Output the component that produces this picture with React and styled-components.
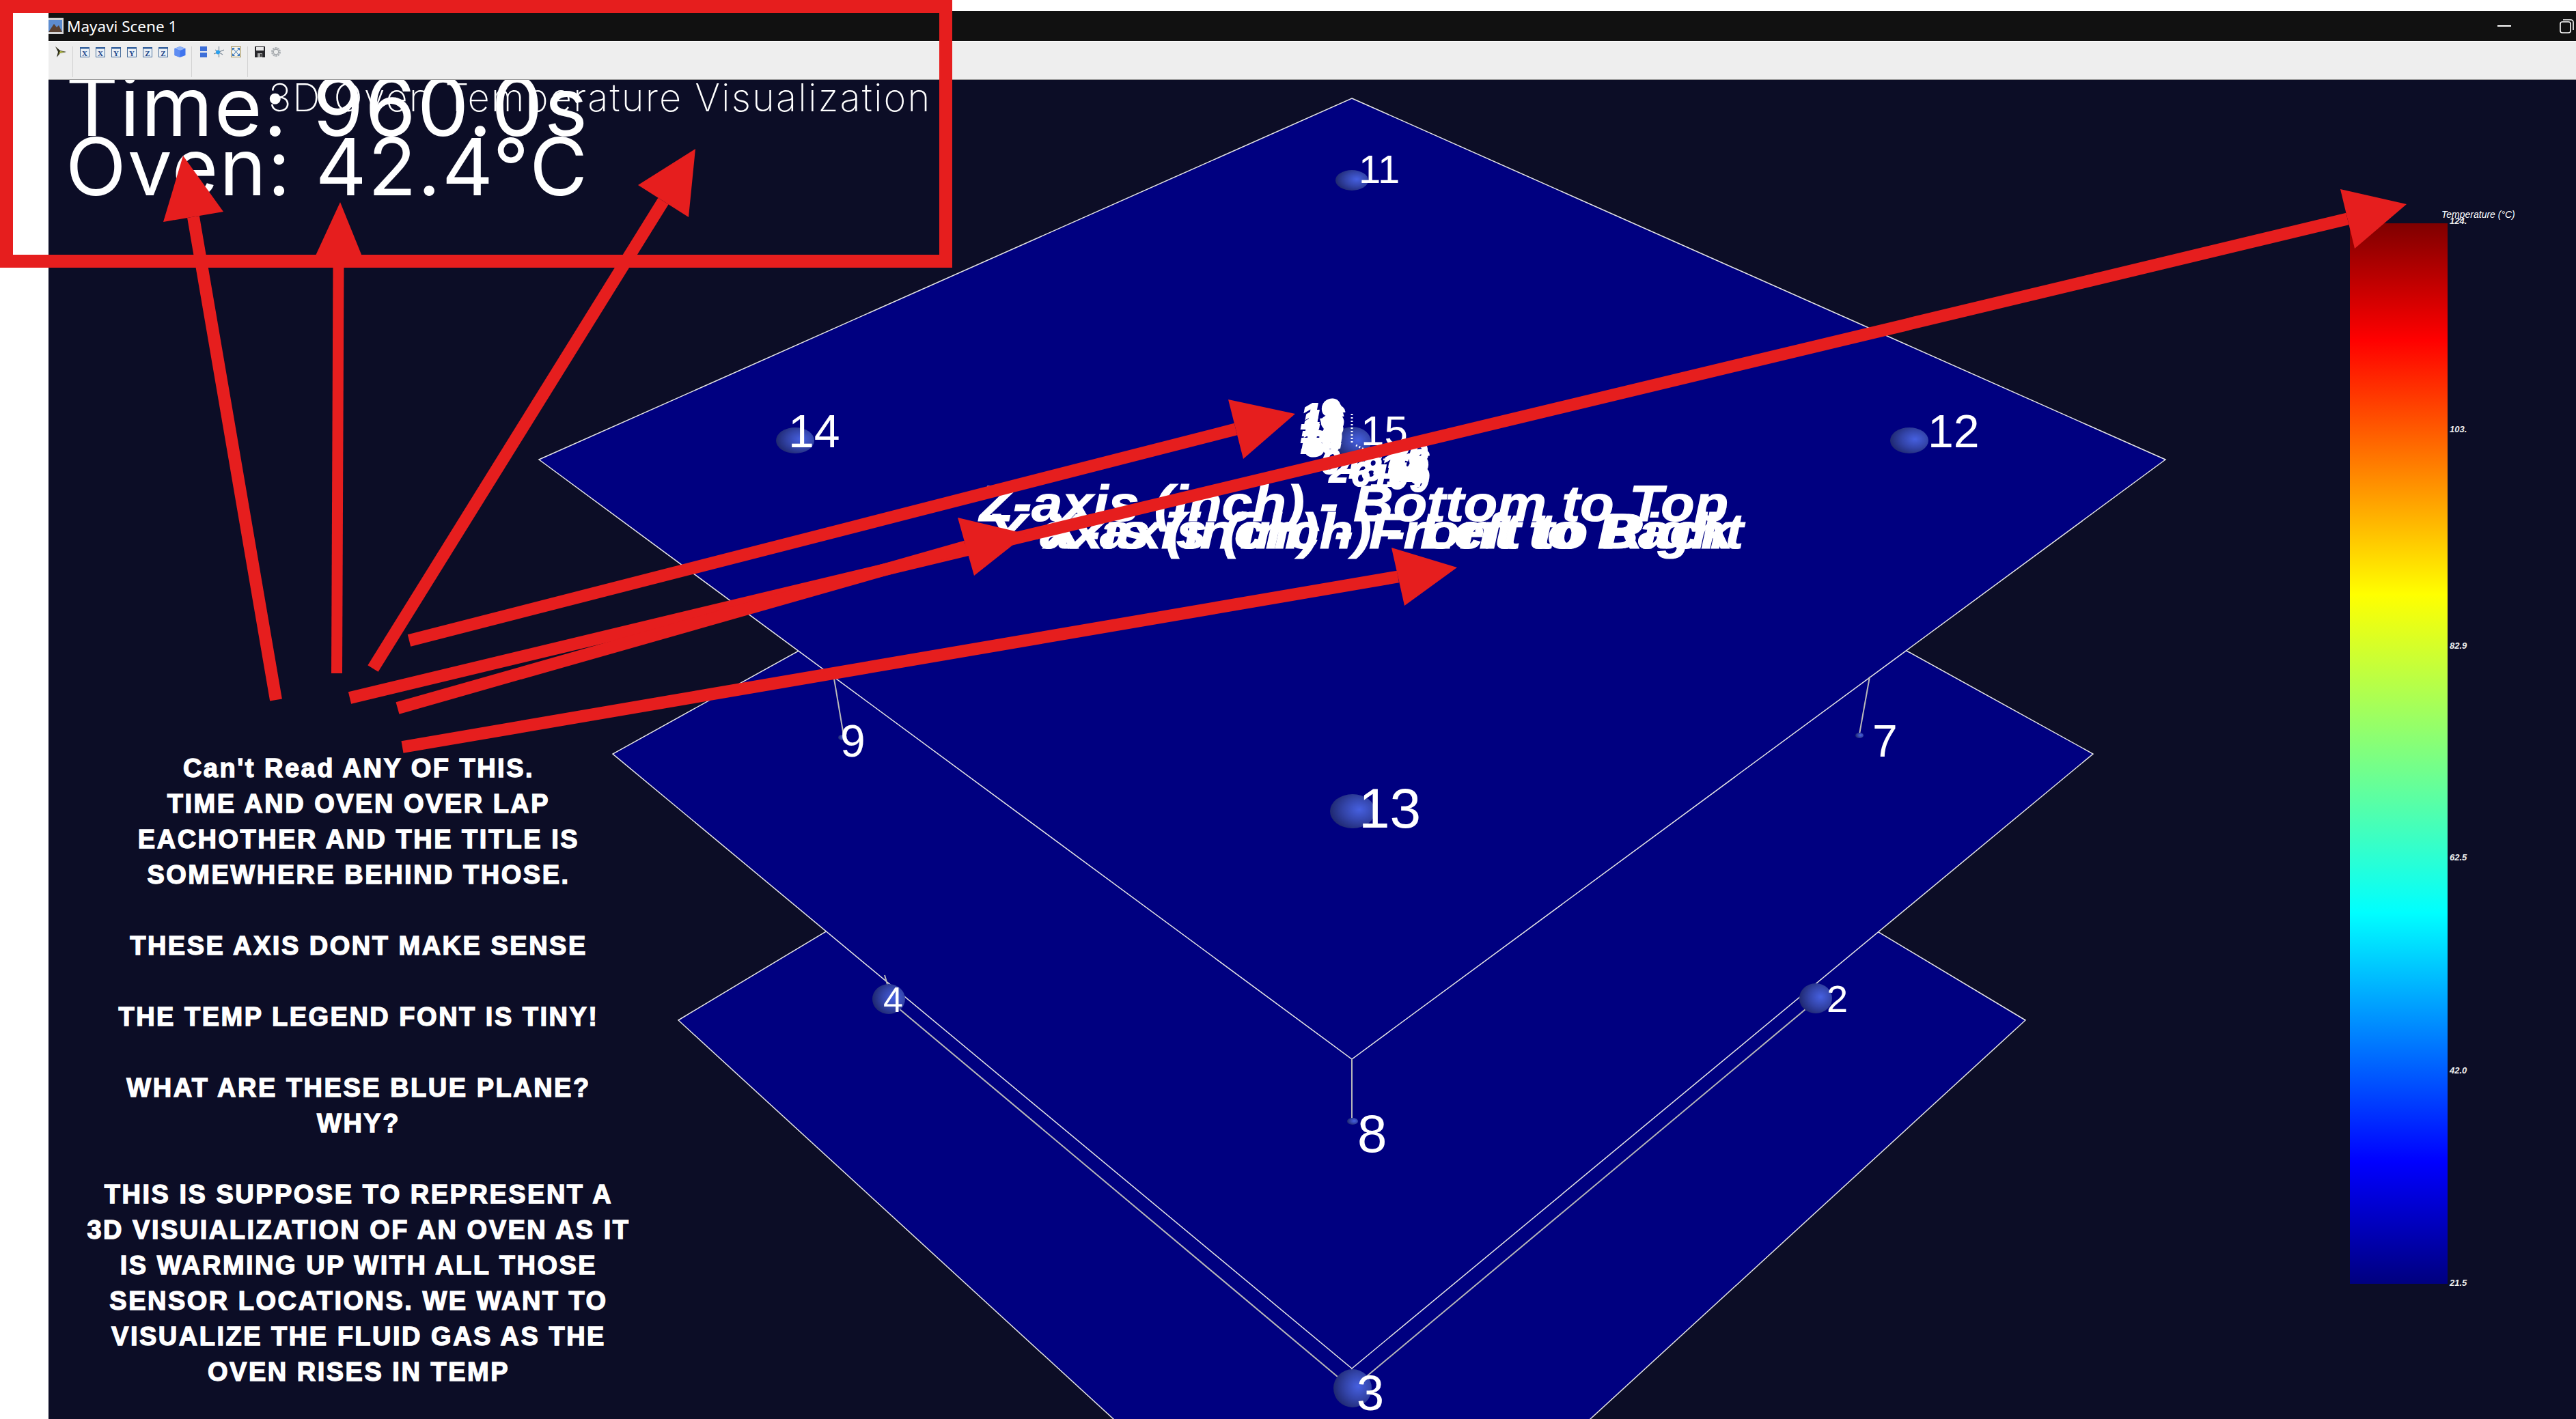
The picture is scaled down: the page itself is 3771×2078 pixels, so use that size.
import React from 'react';
import styled, { createGlobalStyle } from 'styled-components';

const GlobalStyle = createGlobalStyle`
  html, body {
    margin: 0;
    padding: 0;
    background: #fff;
    font-family: "Liberation Sans", Arial, sans-serif;
  }
`;

const Page = styled.div`
  position: relative;
  width: 3771px;
  height: 2078px;
  padding: 16px 0 0 71px;
  box-sizing: border-box;
  background: #fff;
  overflow: hidden;
`;

const Window = styled.div`
  display: flex;
  flex-direction: column;
  height: 100%;
`;

const TitleBar = styled.div`
  display: flex;
  align-items: center;
  flex: 0 0 45px;
  background: #111;
  border-bottom: 1px solid #fff;
  box-sizing: border-box;
`;

const WindowTitle = styled.span`
  margin-left: 5px;
  font-family: "Noto Sans", sans-serif;
  font-size: 22.5px;
  color: #fff;
`;

const WindowControls = styled.div`
  display: flex;
  align-items: center;
  gap: 71px;
  margin-left: auto;
  padding-right: 3px;
`;

const MinimizeLine = styled.div`
  width: 20px;
  height: 2px;
  background: #fff;
`;

const Toolbar = styled.div`
  display: flex;
  align-items: flex-start;
  flex: 0 0 56px;
  padding: 7px 0 0 9px;
  background: #eee;
  border-bottom: 1px solid #999;
  box-sizing: border-box;
`;

const ToolGroup = styled.div`
  display: flex;
  align-items: center;
  gap: ${p => p.$gap || 8}px;
  height: 16px;
`;

const ToolSeparator = styled.div`
  width: 1px;
  height: 45px;
  margin: 0 ${p => p.$after || 10}px 0 ${p => p.$before || 9}px;
  background: #d2d2d2;
`;

const Scene = styled.div`
  position: relative;
  flex: 1;
  overflow: hidden;
  background: #0c0d26;
`;

const SceneDrawing = styled.svg`
  position: absolute;
  top: 0;
  left: 0;
  width: 3700px;
  height: 1961px;
`;

const Hud = styled.div`
  position: absolute;
  left: ${p => p.$x}px;
  top: ${p => p.$y}px;
  font-family: "Inter", "Liberation Sans", sans-serif;
  font-size: ${p => p.$size}px;
  font-weight: ${p => p.$weight || 400};
  line-height: 1;
  letter-spacing: ${p => p.$spacing || 0}px;
  color: #fff;
  white-space: nowrap;
`;

const Note = styled.div`
  position: absolute;
  left: 24px;
  top: 982px;
  width: 860px;
  font-size: 38px;
  line-height: 52px;
  font-weight: 700;
  text-align: center;
  color: #fff;
  -webkit-text-stroke: 1.4px #fff;
  letter-spacing: 2.5px;
`;

const NotePara = styled.p`
  margin: 0 0 52px;
`;

const Legend = styled.div`
  position: absolute;
  left: 3369px;
  top: 210px;
  width: 143px;
  height: 1553px;
  background: linear-gradient(
    to top,
    #00007f 0%,
    #0000ff 11.5%,
    #00ffff 35%,
    #7fff7f 50%,
    #ffff00 65%,
    #ff0000 89%,
    #7f0000 100%
  );
`;

const LegendTitle = styled.span`
  position: absolute;
  left: 134px;
  top: -21px;
  font-size: 14px;
  font-style: italic;
  color: #fff;
  white-space: nowrap;
`;

const LegendTick = styled.span`
  position: absolute;
  left: 146px;
  top: ${p => p.$y}px;
  font-size: 13px;
  font-style: italic;
  font-weight: 700;
  line-height: 13px;
  color: #eee;
`;

const AnnotationLayer = styled.svg`
  position: absolute;
  top: 0;
  left: 0;
  width: 3771px;
  height: 2078px;
  pointer-events: none;
`;

const RedBox = styled.div`
  position: absolute;
  top: 0;
  left: 0;
  width: 1394px;
  height: 392px;
  border: 19px solid #e61e1e;
  box-sizing: border-box;
`;

const SensorLabel = styled.text`
  font-family: "Liberation Sans", sans-serif;
  fill: #fff;
`;

const TickBlob = styled.text`
  font-family: "Liberation Sans", sans-serif;
  font-style: italic;
  font-weight: 700;
  fill: #fff;
  stroke: #fff;
  stroke-width: 2px;
`;

const AxisLabel = styled.text`
  font-family: "Liberation Sans", sans-serif;
  font-style: italic;
  font-weight: 700;
  fill: #fff;
  stroke: #fff;
  stroke-width: 1.2px;
`;

// all scene numbers below are in page pixels, the viewBox takes care of the offset
const PLANES = [
  '1979,902 2965,1494 1979,2398 993,1494',
  '1979,504 3064,1104 1979,2004 897,1104',
  '1979,144 3170,673 1979,1551 789,673',
];

const WIRES = [
  [1317, 1478, 1958, 2016],
  [2643, 1478, 2000, 2016],
  [1979, 2004, 1979, 2028],
  [1979, 1551, 1979, 1642],
  [1221, 994, 1235, 1077],
  [2737, 991, 2722, 1075],
  [1295, 1428, 1300, 1445],
];

const SENSORS = [
  { cx: 1979, cy: 264, rx: 24, ry: 15, label: '11', x: 1989, y: 268, size: 58 },
  { cx: 1164, cy: 645, rx: 28, ry: 19, label: '14', x: 1154, y: 655, size: 68 },
  { cx: 2795, cy: 645, rx: 28, ry: 19, label: '12', x: 2822, y: 655, size: 68 },
  { cx: 1980, cy: 647, rx: 27, ry: 22, label: '15', x: 1992, y: 652, size: 62 },
  { cx: 1980, cy: 1188, rx: 33, ry: 25, label: '13', x: 1989, y: 1212, size: 82 },
  { cx: 1301, cy: 1463, rx: 24, ry: 22, label: '4', x: 1293, y: 1482, size: 52 },
  { cx: 2658, cy: 1462, rx: 24, ry: 22, label: '2', x: 2674, y: 1482, size: 56 },
  { cx: 1980, cy: 2033, rx: 28, ry: 28, label: '3', x: 1986, y: 2065, size: 72 },
  { cx: 1980, cy: 1642, rx: 8, ry: 5, label: '8', x: 1987, y: 1687, size: 78 },
  { cx: 1233, cy: 1080, rx: 6, ry: 4, label: '9', x: 1230, y: 1108, size: 66 },
  { cx: 2722, cy: 1077, rx: 6, ry: 4, label: '7', x: 2741, y: 1108, size: 66 },
];

// overlapping tick numbers of the two axes that end up on top of each other
const TICKS = [
  ['18', 1904, 628, 54], ['16', 1906, 638, 54], ['14', 1904, 648, 54], ['12', 1906, 656, 54],
  ['10', 1904, 664, 54], ['8', 1910, 668, 54], ['9', 1932, 622, 54], ['6', 1938, 632, 54],
  ['0', 1934, 694, 50], ['2', 1946, 706, 50], ['4', 1962, 700, 50], ['6', 1978, 712, 50],
  ['8', 1994, 704, 50], ['10', 2006, 716, 50], ['12', 2022, 700, 50], ['14', 2030, 712, 50],
  ['16', 2036, 694, 50], ['18', 2034, 704, 50], ['20', 2034, 684, 50], ['8', 2062, 694, 50],
  ['6', 2062, 708, 50], ['9', 2064, 720, 50],
];

const ARROWS = [
  { tail: [404, 1025], tip: [268, 228], head: [[239, 325], [327, 310]], width: 18 },
  { tail: [493, 986], tip: [498, 296], head: [[457, 385], [534, 385]], width: 16 },
  { tail: [546, 979], tip: [1018, 218], head: [[934, 271], [1008, 318]], width: 18 },
  { tail: [599, 938], tip: [1896, 606], head: [[1798, 585], [1820, 672]], width: 18 },
  { tail: [512, 1022], tip: [3523, 299], head: [[3426, 277], [3447, 364]], width: 18 },
  { tail: [582, 1037], tip: [1503, 782], head: [[1402, 758], [1426, 843]], width: 18 },
  { tail: [589, 1094], tip: [2133, 831], head: [[2037, 802], [2056, 887]], width: 18 },
];

const XyzButton = ({ letter }) => (
  <svg width="14" height="15" viewBox="0 0 14 15">
    <rect x="0.5" y="0.5" width="13" height="14" fill="#eaf0f6" stroke="#4a6f9c" />
    <rect x="0" y="0" width="14" height="2.5" fill="#34609c" />
    <text x="7" y="12.5" textAnchor="middle" fontFamily="Liberation Serif" fontWeight="700" fontSize="11" fill="#1a4488">{letter}</text>
  </svg>
);

const PipelineIcon = () => (
  <svg width="17" height="16" viewBox="0 0 17 16">
    <path d="M1 0 L8 6 L17 8 L8 10 L3 16 L5 8 Z" fill="#2b2b1a" />
    <path d="M8 7 L15 8 L8 9.5 L5.5 12 Z" fill="#c7cf4a" />
  </svg>
);

const IsoCube = () => (
  <svg width="17" height="16" viewBox="0 0 17 16">
    <path d="M8.5 0 L16.5 3 V13 L8.5 16 L0.5 13 V3 Z" fill="#3f74ee" />
    <path d="M8.5 0 L16.5 3 L8.5 6 L0.5 3 Z" fill="#8fb2f7" />
    <path d="M8.5 6 V16 L0.5 13 V3 Z" fill="#5f8df2" />
  </svg>
);

const ParallelIcon = () => (
  <svg width="10" height="16" viewBox="0 0 10 16">
    <rect x="0" y="0" width="10" height="7" fill="#3d6fd8" />
    <rect x="0" y="9" width="10" height="7" fill="#3d6fd8" />
  </svg>
);

const AxesIcon = () => (
  <svg width="15" height="16" viewBox="0 0 15 16">
    <path d="M7.5 0 V16 M0 11 L15 5 M2 5 L13 12" stroke="#7a8a99" strokeWidth="1.2" />
    <circle cx="6" cy="8.5" r="3" fill="#29a0ee" />
  </svg>
);

const FullScreenIcon = () => (
  <svg width="15" height="16" viewBox="0 0 15 16">
    <rect x="0.5" y="0.5" width="14" height="15" fill="#f4f4ee" stroke="#a5935c" />
    <path d="M2 2 L6 2 L2 6 Z M13 2 L9 2 L13 6 Z M2 14 L6 14 L2 10 Z M13 14 L9 14 L13 10 Z" fill="#2f6fb8" />
    <path d="M3 3 L12 13 M12 3 L3 13" stroke="#2f6fb8" strokeWidth="1" />
  </svg>
);

const SaveIcon = () => (
  <svg width="15" height="16" viewBox="0 0 15 16">
    <path d="M0 0 H15 V16 H0 Z" fill="#26262a" />
    <rect x="2" y="1" width="11" height="5" fill="#e8e8e8" />
    <rect x="4" y="10" width="7" height="6" fill="#a9a9a9" />
    <rect x="8" y="11" width="2" height="4" fill="#333" />
  </svg>
);

const GearIcon = () => (
  <svg width="16" height="16" viewBox="0 0 16 16">
    <circle cx="8" cy="8" r="5.5" fill="none" stroke="#aeb2b6" strokeWidth="3" strokeDasharray="2.4 1" />
    <circle cx="8" cy="8" r="3.8" fill="#eceded" stroke="#9a9ea2" strokeWidth="1" />
  </svg>
);

const SceneIcon = () => (
  <svg width="22" height="24" viewBox="0 0 22 24">
    <rect x="0" y="0" width="22" height="24" fill="#d5d5d5" />
    <rect x="0" y="3" width="20" height="18" fill="#5d8ccf" />
    <path d="M0 21 L8 9 L12 14 L15 11 L20 21 Z" fill="#5a4030" />
  </svg>
);

const RestoreIcon = () => (
  <svg width="21" height="21" viewBox="0 0 21 21" fill="none" stroke="#fff" strokeWidth="1.6">
    <rect x="1" y="4" width="15" height="16" rx="3" />
    <path d="M5 1 H16 Q20 1 20 5 V16" />
  </svg>
);

const App = () => (
  <Page>
    <GlobalStyle />
    <Window>
      <TitleBar>
        <SceneIcon />
        <WindowTitle>Mayavi Scene 1</WindowTitle>
        <WindowControls>
          <MinimizeLine />
          <RestoreIcon />
        </WindowControls>
      </TitleBar>
      <Toolbar>
        <ToolGroup><PipelineIcon /></ToolGroup>
        <ToolSeparator />
        <ToolGroup $gap={9}>
          {['X', 'X', 'Y', 'Y', 'Z', 'Z'].map((letter, i) => <XyzButton key={i} letter={letter} />)}
          <IsoCube />
        </ToolGroup>
        <ToolSeparator $before={8} $after={12} />
        <ToolGroup $gap={10}>
          <ParallelIcon />
          <AxesIcon />
          <FullScreenIcon />
        </ToolGroup>
        <ToolSeparator />
        <ToolGroup $gap={8}>
          <SaveIcon />
          <GearIcon />
        </ToolGroup>
      </Toolbar>
      <Scene>
        <SceneDrawing viewBox="71 117 3700 1961">
          <defs>
            <radialGradient id="sphere" cx="0.65" cy="0.45" r="0.7">
              <stop offset="0" stopColor="#4660e0" />
              <stop offset="0.5" stopColor="#3344a8" />
              <stop offset="1" stopColor="#1c2468" />
            </radialGradient>
          </defs>
          {PLANES.map(points => (
            <polygon key={points} points={points} fill="#000080" stroke="#e4e4e4" strokeWidth="1.5" />
          ))}
          {WIRES.map(([x1, y1, x2, y2]) => (
            <line key={`${x1}-${y1}`} x1={x1} y1={y1} x2={x2} y2={y2} stroke="#b9b9b9" strokeWidth="2" />
          ))}
          {SENSORS.map(s => (
            <ellipse key={s.label} cx={s.cx} cy={s.cy} rx={s.rx} ry={s.ry} fill="url(#sphere)" />
          ))}
          {SENSORS.map(s => (
            <SensorLabel key={s.label} x={s.x} y={s.y} fontSize={s.size}>{s.label}</SensorLabel>
          ))}
          <path d="M1979 606 V650" stroke="#fff" strokeWidth="3" strokeDasharray="2 3" />
          <path d="M1985 652 L2060 690" stroke="#fff" strokeWidth="3" strokeDasharray="2 3" />
          {TICKS.map(([text, x, y, size], i) => (
            <TickBlob key={i} x={x} y={y} fontSize={size}>{text}</TickBlob>
          ))}
          <AxisLabel x="1434" y="763" fontSize="74" textLength="1096" lengthAdjust="spacingAndGlyphs">Z-axis (inch) - Bottom to Top</AxisLabel>
          <AxisLabel x="1446" y="803" fontSize="72" textLength="1090" lengthAdjust="spacingAndGlyphs">Y-axis (inch) - Front to Back</AxisLabel>
          <AxisLabel x="1530" y="803" fontSize="72" textLength="1022" lengthAdjust="spacingAndGlyphs">X-axis (inch) - Left to Right</AxisLabel>
        </SceneDrawing>
        <Hud $x={25} $y={-21} $size={120} $spacing={2}>Time: 960.0s</Hud>
        <Hud $x={25} $y={69} $size={116} $spacing={2}>Oven: 42.4°C</Hud>
        <Hud $x={322} $y={-2} $size={56} $weight={250} $spacing={2.1}>3D Oven Temperature Visualization</Hud>
        <Note>
          <NotePara>
            Can't Read ANY OF THIS.<br />
            TIME AND OVEN OVER LAP<br />
            EACHOTHER AND THE TITLE IS<br />
            SOMEWHERE BEHIND THOSE.
          </NotePara>
          <NotePara>THESE AXIS DONT MAKE SENSE</NotePara>
          <NotePara>THE TEMP LEGEND FONT IS TINY!</NotePara>
          <NotePara>
            WHAT ARE THESE BLUE PLANE?<br />
            WHY?
          </NotePara>
          <NotePara>
            THIS IS SUPPOSE TO REPRESENT A<br />
            3D VISUIALIZATION OF AN OVEN AS IT<br />
            IS WARMING UP WITH ALL THOSE<br />
            SENSOR LOCATIONS. WE WANT TO<br />
            VISUALIZE THE FLUID GAS AS THE<br />
            OVEN RISES IN TEMP
          </NotePara>
        </Note>
        <Legend>
          <LegendTitle>Temperature (°C)</LegendTitle>
          <LegendTick $y={-10}>124.</LegendTick>
          <LegendTick $y={295}>103.</LegendTick>
          <LegendTick $y={612}>82.9</LegendTick>
          <LegendTick $y={922}>62.5</LegendTick>
          <LegendTick $y={1234}>42.0</LegendTick>
          <LegendTick $y={1545}>21.5</LegendTick>
        </Legend>
      </Scene>
    </Window>
    <AnnotationLayer viewBox="0 0 3771 2078">
      {ARROWS.map(({ tail, tip, head, width }) => {
        const neck = [(head[0][0] + head[1][0]) / 2, (head[0][1] + head[1][1]) / 2];
        return (
          <g key={`${tip[0]}`}>
            <line x1={tail[0]} y1={tail[1]} x2={neck[0]} y2={neck[1]} stroke="#e61e1e" strokeWidth={width} />
            <polygon points={`${tip} ${head[0]} ${head[1]}`} fill="#e61e1e" />
          </g>
        );
      })}
    </AnnotationLayer>
    <RedBox />
  </Page>
);

export default App;
